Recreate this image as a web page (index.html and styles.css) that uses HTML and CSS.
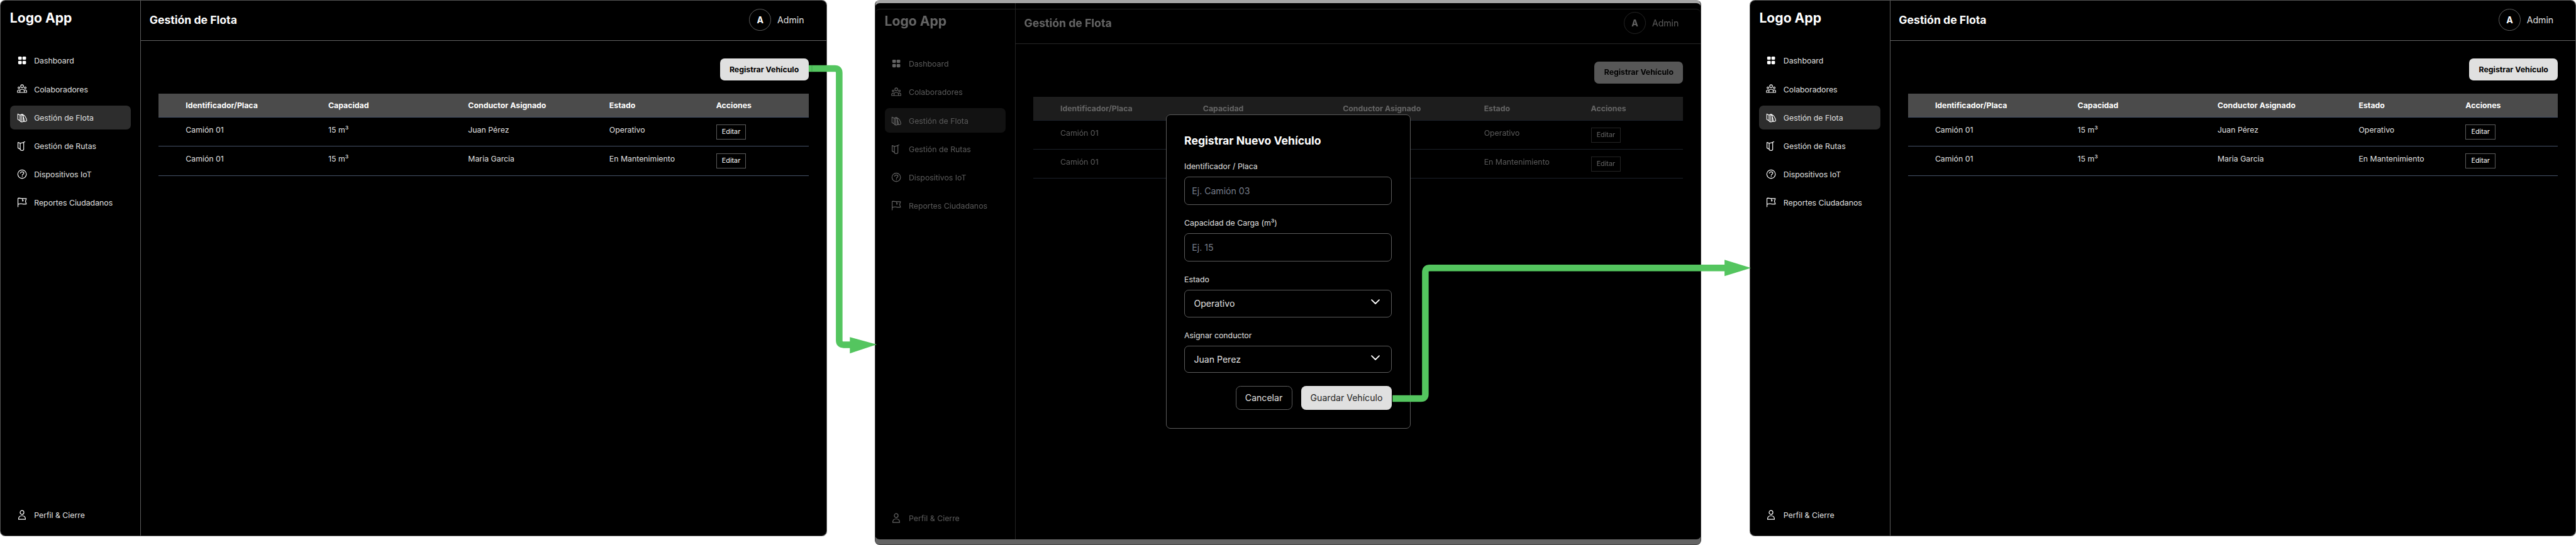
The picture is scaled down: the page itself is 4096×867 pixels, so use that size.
FILE: index.html
```
<!DOCTYPE html>
<html lang="es">
<head>
<meta charset="utf-8">
<title>Gestión de Flota</title>
<link rel="stylesheet" href="styles.css">
</head>
<body>
<svg class="sprite" aria-hidden="true">
  <symbol id="i-dash" viewBox="0 0 78 78"><g fill="currentColor"><rect x="12.5" y="12.5" width="24" height="22" rx="6"/><rect x="42" y="12.5" width="24" height="22" rx="6"/><rect x="12.5" y="42" width="24" height="23" rx="6"/><rect x="42" y="42" width="24" height="23" rx="6"/></g></symbol>
  <symbol id="i-team" viewBox="0 0 78 78"><g fill="none" stroke="currentColor" stroke-width="4.8" stroke-linejoin="round"><circle cx="39" cy="22" r="9.5"/><circle cx="17.5" cy="32.5" r="6"/><circle cx="60.5" cy="32.5" r="6"/><path d="M24 64V56c0-8 6-13 15-13s15 5 15 13v8M24 64H8v-7c0-6 4-10 10-10 3 0 5 .6 7 2M54 64h16v-7c0-6-4-10-10-10-3 0-5 .6-7 2M24 64h30"/></g></symbol>
  <symbol id="i-fleet" viewBox="0 0 78 78"><g fill="none" stroke="currentColor" stroke-width="4.8" stroke-linejoin="round"><path d="M10 14v37l15 9V22zM25 22l9-5M25 22v38c0 4 3 7 8 8M34 16v52M34 17c5-2 9-1 12 2v44c0 4-5 6-12 5M46 20c12 4 20 18 24 36 1 6-3 9-9 9-6 0-11 0-15-1M38 18c8 8 14 26 16 46"/></g></symbol>
  <symbol id="i-route" viewBox="0 0 78 78"><g fill="none" stroke="currentColor" stroke-width="5" stroke-linejoin="round" stroke-linecap="round"><path d="M11 15v38l15 8V21zM26 21l24-5v46c0 5-4 8-10 8-8 0-14-3-14-9M42 17l16-6"/></g></symbol>
  <symbol id="i-help" viewBox="0 0 78 78"><g fill="none" stroke="currentColor" stroke-width="5" stroke-linecap="round"><circle cx="39" cy="39" r="29"/><path d="M27 32c2-6 7-9 12-9 7 0 12 4 12 9 0 7-11 8-11 15"/></g><circle cx="40" cy="56" r="3.2" fill="currentColor"/></symbol>
  <symbol id="i-flag" viewBox="0 0 78 78"><g fill="none" stroke="currentColor" stroke-width="5" stroke-linejoin="round" stroke-linecap="round"><path d="M11 68V11l6-2 24 3h27l-6 19 6 19H46l-16-3-19 4M42 12v18l6-4"/></g></symbol>
  <symbol id="i-user" viewBox="0 0 78 78"><g fill="none" stroke="currentColor" stroke-width="5.2" stroke-linejoin="round"><circle cx="38.5" cy="22.5" r="13"/><path d="M15 69c0-14 8-24 23.500-24S62 55 62 69z"/></g></symbol>
  <symbol id="i-down" viewBox="0 0 20 12"><path d="M1.500 1.500 10 10l8.500-8.500" fill="none" stroke="currentColor" stroke-width="2.6" stroke-linecap="round" stroke-linejoin="round"/></symbol>
</svg>

<main class="board">
  <section class="frame">
    <div class="app">
      <aside class="sidebar">
        <div class="logo"><span>Logo App</span></div>
        <nav class="nav">
          <a class="nav-item"><svg class="icon"><use href="#i-dash"/></svg><span>Dashboard</span></a>
          <a class="nav-item"><svg class="icon"><use href="#i-team"/></svg><span>Colaboradores</span></a>
          <a class="nav-item active"><svg class="icon"><use href="#i-fleet"/></svg><span>Gestión de Flota</span></a>
          <a class="nav-item"><svg class="icon"><use href="#i-route"/></svg><span>Gestión de Rutas</span></a>
          <a class="nav-item"><svg class="icon"><use href="#i-help"/></svg><span>Dispositivos IoT</span></a>
          <a class="nav-item"><svg class="icon"><use href="#i-flag"/></svg><span>Reportes Ciudadanos</span></a>
        </nav>
        <a class="nav-item profile"><svg class="icon"><use href="#i-user"/></svg><span>Perfil &amp; Cierre</span></a>
      </aside>
      <div class="content">
        <header class="topbar"><h1>Gestión de Flota</h1><div class="user"><span class="avatar">A</span><span>Admin</span></div></header>
        <div class="page">
          <button class="register"><span>Registrar Vehículo</span></button>
          <div class="table">
            <div class="row head"><span>Identificador/Placa</span><span>Capacidad</span><span>Conductor Asignado</span><span>Estado</span><span>Acciones</span></div>
            <div class="row"><span>Camión 01</span><span>15 m³</span><span>Juan Pérez</span><span>Operativo</span><button class="edit">Editar</button></div>
            <div class="row"><span>Camión 01</span><span>15 m³</span><span>Maria Garcia</span><span>En Mantenimiento</span><button class="edit">Editar</button></div>
          </div>
        </div>
      </div>
    </div>
  </section>

  <section class="frame overlay-frame">
    <div class="app dimmed">
      <aside class="sidebar">
        <div class="logo"><span>Logo App</span></div>
        <nav class="nav">
          <a class="nav-item"><svg class="icon"><use href="#i-dash"/></svg><span>Dashboard</span></a>
          <a class="nav-item"><svg class="icon"><use href="#i-team"/></svg><span>Colaboradores</span></a>
          <a class="nav-item active"><svg class="icon"><use href="#i-fleet"/></svg><span>Gestión de Flota</span></a>
          <a class="nav-item"><svg class="icon"><use href="#i-route"/></svg><span>Gestión de Rutas</span></a>
          <a class="nav-item"><svg class="icon"><use href="#i-help"/></svg><span>Dispositivos IoT</span></a>
          <a class="nav-item"><svg class="icon"><use href="#i-flag"/></svg><span>Reportes Ciudadanos</span></a>
        </nav>
        <a class="nav-item profile"><svg class="icon"><use href="#i-user"/></svg><span>Perfil &amp; Cierre</span></a>
      </aside>
      <div class="content">
        <header class="topbar"><h1>Gestión de Flota</h1><div class="user"><span class="avatar">A</span><span>Admin</span></div></header>
        <div class="page">
          <button class="register"><span>Registrar Vehículo</span></button>
          <div class="table">
            <div class="row head"><span>Identificador/Placa</span><span>Capacidad</span><span>Conductor Asignado</span><span>Estado</span><span>Acciones</span></div>
            <div class="row"><span>Camión 01</span><span></span><span></span><span>Operativo</span><button class="edit">Editar</button></div>
            <div class="row"><span>Camión 01</span><span></span><span></span><span>En Mantenimiento</span><button class="edit">Editar</button></div>
          </div>
        </div>
      </div>
    </div>
    <div class="inner-edge"></div>
    <form class="modal">
      <h2>Registrar Nuevo Vehículo</h2>
      <div class="field"><label>Identificador / Placa</label><div class="input placeholder">Ej. Camión 03</div></div>
      <div class="field"><label>Capacidad de Carga (m³)</label><div class="input placeholder">Ej. 15</div></div>
      <div class="field"><label>Estado</label><div class="input select"><span>Operativo</span><svg class="chevron"><use href="#i-down"/></svg></div></div>
      <div class="field"><label>Asignar conductor</label><div class="input select"><span>Juan Perez</span><svg class="chevron"><use href="#i-down"/></svg></div></div>
      <div class="actions"><button type="button" class="cancel">Cancelar</button><button type="button" class="save">Guardar Vehículo</button></div>
    </form>
  </section>

  <section class="frame">
    <div class="app">
      <aside class="sidebar">
        <div class="logo"><span>Logo App</span></div>
        <nav class="nav">
          <a class="nav-item"><svg class="icon"><use href="#i-dash"/></svg><span>Dashboard</span></a>
          <a class="nav-item"><svg class="icon"><use href="#i-team"/></svg><span>Colaboradores</span></a>
          <a class="nav-item active"><svg class="icon"><use href="#i-fleet"/></svg><span>Gestión de Flota</span></a>
          <a class="nav-item"><svg class="icon"><use href="#i-route"/></svg><span>Gestión de Rutas</span></a>
          <a class="nav-item"><svg class="icon"><use href="#i-help"/></svg><span>Dispositivos IoT</span></a>
          <a class="nav-item"><svg class="icon"><use href="#i-flag"/></svg><span>Reportes Ciudadanos</span></a>
        </nav>
        <a class="nav-item profile"><svg class="icon"><use href="#i-user"/></svg><span>Perfil &amp; Cierre</span></a>
      </aside>
      <div class="content">
        <header class="topbar"><h1>Gestión de Flota</h1><div class="user"><span class="avatar">A</span><span>Admin</span></div></header>
        <div class="page">
          <button class="register"><span>Registrar Vehículo</span></button>
          <div class="table">
            <div class="row head"><span>Identificador/Placa</span><span>Capacidad</span><span>Conductor Asignado</span><span>Estado</span><span>Acciones</span></div>
            <div class="row"><span>Camión 01</span><span>15 m³</span><span>Juan Pérez</span><span>Operativo</span><button class="edit">Editar</button></div>
            <div class="row"><span>Camión 01</span><span>15 m³</span><span>Maria Garcia</span><span>En Mantenimiento</span><button class="edit">Editar</button></div>
          </div>
        </div>
      </div>
    </div>
  </section>

  <svg class="flow" viewBox="0 0 5842 1236" preserveAspectRatio="none">
    <g fill="none" stroke="#54c55f" stroke-width="15">
      <path d="M1834 155.500H1893.200Q1903.200 155.500 1903.200 165.500V771.800Q1903.200 781.800 1913.200 781.800H1930"/>
      <path d="M3158 903.800H3222.500Q3232.500 903.800 3232.500 893.800V617.600Q3232.500 607.600 3242.500 607.600H3915"/>
    </g>
    <path d="M1841.300 148V163" stroke="#3c9a4a" stroke-width="1"/>
    <g fill="#54c55f"><path d="M1927.300 764.400 1988.300 781.300 1927.300 801.600z"/><path d="M3911 589 3971 607.600 3911 626.200z"/></g>
  </svg>
</main>
</body>
</html>
```
FILE: styles.css
```
/* 1rem equals ten board units */
html { font-size: 7.0113px; }
* { box-sizing: border-box; margin: 0; padding: 0; }
body {
  width: 4096px;
  height: 867px;
  overflow: hidden;
  background: #fff;
  font-family: Inter, "Liberation Sans", sans-serif;
}
.sprite { position: absolute; width: 0; height: 0; }
button { font: inherit; border: 0; white-space: nowrap; }

.board {
  position: relative;
  display: flex;
  align-items: flex-start;
  gap: 10.87rem;
  width: 4096px;
  height: 867px;
}
.flow { position: absolute; inset: 0; width: 4096px; height: 867px; }

.frame {
  flex: none;
  width: 187.5rem;
  height: 121.7rem;
  border: 1px solid #555;
  border-radius: 1.1rem;
  background: #000;
  overflow: hidden;
}
.app {
  display: flex;
  width: 187.5rem;
  height: 121.7rem;
  margin: -1px 0 0 -1px;
  background: #000;
  color: #e0e0e0;
  font-size: 1.758rem;
  line-height: 2.6rem;
  white-space: nowrap;
}

.sidebar {
  display: flex;
  flex-direction: column;
  width: 31.98rem;
  padding: 2.25rem 2.1rem 2.1rem 2.25rem;
  border-right: 1px solid #5c5c5c;
}
.logo {
  height: 8.75rem;
  color: #fff;
  font-size: 3.014rem;
  font-weight: 700;
  line-height: 3.8rem;
}
.nav { display: flex; flex-direction: column; gap: .95rem; }
.nav-item {
  display: flex;
  align-items: center;
  gap: 1.48rem;
  height: 5.5rem;
  padding-left: 1.4rem;
  border-radius: 1rem;
}
.nav-item span { padding-top: .3rem; }
.nav-item.active { background: #2d2d2d; }
.icon { flex: none; width: 2.6rem; height: 2.6rem; color: #fff; }
.profile { margin-top: auto; }

.content { flex: 1; }
.topbar {
  display: flex;
  align-items: center;
  justify-content: space-between;
  height: 9.25rem;
  padding: 0 5.15rem 0 1.95rem;
  border-bottom: 1px solid #626262;
}
.topbar h1 { color: #fff; font-size: 2.512rem; font-weight: 700; }
.user { display: flex; align-items: center; gap: 1.4rem; font-size: 2.01rem; }
.avatar {
  display: flex;
  align-items: center;
  justify-content: center;
  width: 5rem;
  height: 5rem;
  border: 1px solid #5c5c5c;
  border-radius: 50%;
  color: #fff;
  font-weight: 700;
}
.page {
  display: flex;
  flex-direction: column;
  align-items: flex-end;
  padding: 4.02rem 4.15rem 0 4rem;
}
.register {
  width: 20.1rem;
  height: 5.03rem;
  border-radius: 1rem;
  background: #e0e0e0;
  color: #000;
  font-size: 1.758rem;
  font-weight: 700;
}
.table { width: 147.4rem; margin-top: 2.9rem; }
.row {
  display: grid;
  grid-template-columns: 32.34rem 31.71rem 32.02rem 24.23rem 1fr;
  align-items: center;
  height: 6.57rem;
  padding-left: 6.16rem;
  border-bottom: 1px solid #465268;
}
.row > span { padding-bottom: .9rem; }
.row.head {
  height: 5.53rem;
  background: #4b4b4b;
  color: #fff;
  font-weight: 700;
}
.row.head > span { padding: .2rem 0 0; }
.edit {
  width: 6.8rem;
  height: 3.5rem;
  border: 1px solid #5c5c5c;
  background: #000;
  color: #fff;
  font-size: 1.54rem;
}

.overlay-frame {
  position: relative;
  height: 123.6rem;
  border-color: #444;
  border-top-color: #a6a6a6;
  background: linear-gradient(#a6a6a6 0 1rem, #646464 1.2rem);
}
.dimmed {
  margin-top: calc(.7rem - 1px);
  border-radius: 1.1rem;
  filter: blur(.6px) brightness(.39);
}
/* rounded rim of the scrim that sits above the dimmed screen */
.inner-edge {
  position: absolute;
  inset: 1.8rem 0 auto 0;
  height: 2rem;
  border-top: 1px solid #222;
  border-radius: 1rem 1rem 0 0;
}
.modal {
  position: absolute;
  top: 25.85rem;
  left: 65.85rem;
  display: flex;
  flex-direction: column;
  width: 55.5rem;
  height: 71.3rem;
  padding: 4rem 4.08rem 0;
  border: 1px solid #5c5c5c;
  border-radius: 1rem;
  background: #000;
  color: #e0e0e0;
  white-space: nowrap;
}
.modal h2 {
  height: 6.5rem;
  color: #fff;
  font-size: 2.512rem;
  font-weight: 700;
  line-height: 3.7rem;
}
.field { display: flex; flex-direction: column; height: 12.84rem; }
.field label { height: 3.5rem; font-size: 1.758rem; line-height: 2.4rem; }
.input {
  display: flex;
  align-items: center;
  width: 47.1rem;
  height: 6.3rem;
  padding-left: 1.6rem;
  border: 1px solid #5c5c5c;
  border-radius: 1rem;
  font-size: 2.01rem;
}
.placeholder { color: #757b88; }
.select { justify-content: space-between; height: 6.15rem; padding: 0 2.6rem 0 2.05rem; }
.field:nth-of-type(3) { height: 12.65rem; }
.field:nth-of-type(4) { height: 11.15rem; }
.chevron { width: 2rem; height: 1.2rem; margin-bottom: .8rem; color: #fff; }
.actions { display: flex; justify-content: flex-end; gap: 2rem; width: 47.1rem; }
.actions { margin-top: -.05rem; padding-top: 1.45rem; }
.actions button { height: 5.45rem; border-radius: 1.1rem; font-size: 2.01rem; }
.cancel { width: 12.85rem; border: 1px solid #5c5c5c; background: #000; color: #e0e0e0; }
.actions .save { width: 20.64rem; background: #e0e0e0; color: #222; }
```
